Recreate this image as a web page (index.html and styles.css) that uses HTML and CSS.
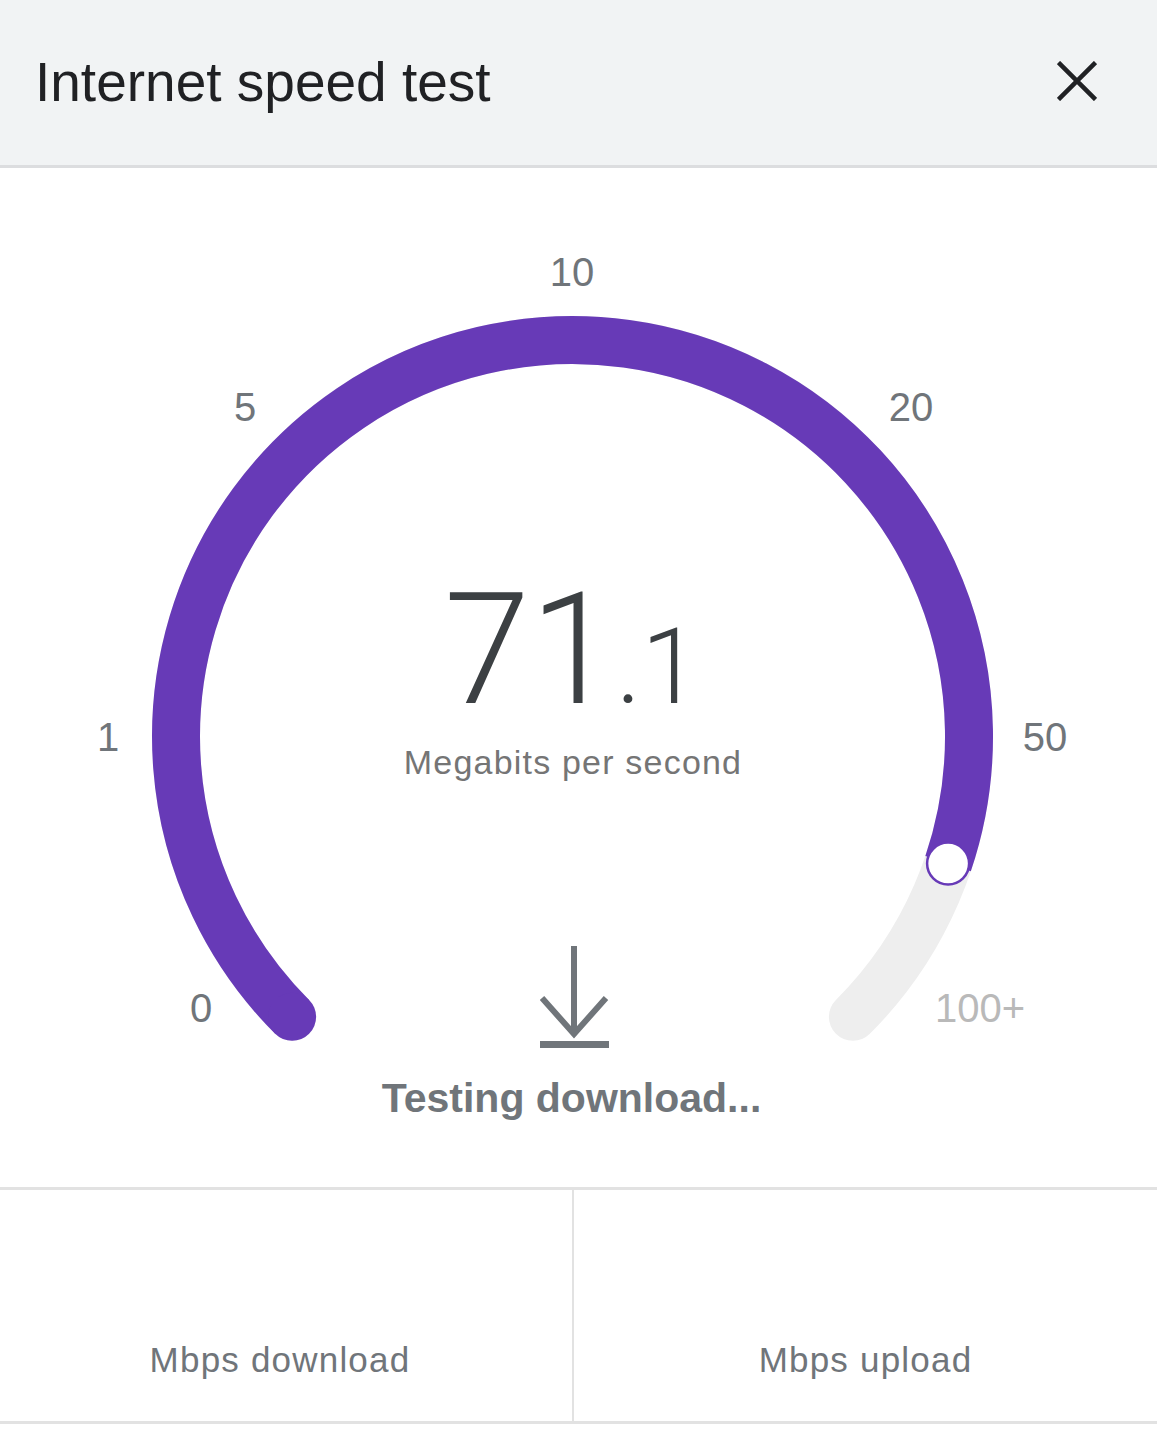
FILE: index.html
```html
<!DOCTYPE html>
<html lang="en">
<head>
<meta charset="utf-8">
<title>Internet speed test</title>
<link rel="stylesheet" href="styles.css">
</head>
<body>
<div class="panel">
  <header class="bar">
    <h1 class="bar-title">Internet speed test</h1>
    <button class="close" aria-label="Close">
      <svg width="40" height="40" viewBox="0 0 40 40" aria-hidden="true">
        <path d="M1.5 1.5 L38.5 38.5 M38.5 1.5 L1.5 38.5" />
      </svg>
    </button>
  </header>

  <section class="gauge">
    <svg class="dial" width="1157" height="1019" viewBox="0 168 1157 1019">
      <path class="track" d="M292.13 1016.87 A396.5 396.5 0 1 1 852.87 1016.87" />
      <path class="fill" d="M292.13 1016.87 A396.5 396.5 0 1 1 948.1 863.6" />
      <circle class="fill-cap" cx="292.13" cy="1016.87" r="24" />
      <circle class="knob" cx="948.1" cy="863.6" r="21" />

      <text class="tick" x="572" y="286">10</text>
      <text class="tick" x="245" y="421">5</text>
      <text class="tick" x="911" y="421">20</text>
      <text class="tick" x="108" y="751">1</text>
      <text class="tick" x="1045" y="751">50</text>
      <text class="tick" x="201" y="1022">0</text>
      <text class="tick tick-max" x="980" y="1022">100+</text>

      <text class="value" x="572" y="703">71<tspan class="value-frac">.1</tspan></text>
      <text class="unit" x="573" y="774">Megabits per second</text>
    </svg>

    <div class="status">
      <svg class="status-icon" width="70" height="104" viewBox="0 0 70 104" aria-hidden="true">
        <path d="M34 0 V88 M2 52 L34 88 L66 52" />
        <rect x="0" y="95" width="69" height="7" />
      </svg>
      <p class="status-text">Testing download...</p>
    </div>
  </section>

  <section class="results">
    <div class="result result-download">
      <span class="result-label">Mbps download</span>
    </div>
    <div class="result result-upload">
      <span class="result-label">Mbps upload</span>
    </div>
  </section>
</div>
</body>
</html>
```

FILE: styles.css
```css
* {
  box-sizing: border-box;
}

html,
body {
  margin: 0;
  padding: 0;
  background: #ffffff;
}

body {
  font-family: "Liberation Sans", Arial, sans-serif;
  color: #202124;
}

.panel {
  width: 1157px;
}

/* Top bar */
.bar {
  height: 168px;
  display: flex;
  align-items: center;
  justify-content: space-between;
  padding: 0 60px 2px 35px;
  background: #f1f3f4;
  border-bottom: 3px solid #dcdddf;
}

.bar-title {
  margin: 0;
  font-size: 55px;
  font-weight: 400;
  line-height: 60px;
  color: #202124;
}

.close {
  width: 40px;
  height: 40px;
  padding: 0;
  border: 0;
  background: none;
  display: block;
  margin-bottom: 2px;
}

.close svg {
  display: block;
}

.close path {
  stroke: #202124;
  stroke-width: 4.5;
  fill: none;
}

/* Dial */
.gauge {
  position: relative;
  height: 1019px;
}

.dial {
  display: block;
}

.track {
  fill: none;
  stroke: #eeeeee;
  stroke-width: 48;
  stroke-linecap: round;
}

.fill {
  fill: none;
  stroke: #673ab7;
  stroke-width: 48;
}

.fill-cap {
  fill: #673ab7;
}

.knob {
  fill: #ffffff;
  stroke: #673ab7;
  stroke-width: 2.5;
}

.tick {
  font-family: "Liberation Sans", Arial, sans-serif;
  font-size: 40px;
  fill: #70757a;
  text-anchor: middle;
}

.tick-max {
  fill: #b9b9b9;
}

.value {
  font-family: Roboto, "Liberation Sans", sans-serif;
  font-weight: 300;
  font-size: 155px;
  fill: #3c4043;
  text-anchor: middle;
}

.value-frac {
  font-size: 106px;
}

.unit {
  font-family: "Liberation Sans", Arial, sans-serif;
  font-size: 34px;
  letter-spacing: 1.2px;
  fill: #757575;
  text-anchor: middle;
}

/* Current phase, under the dial centre */
.status {
  position: absolute;
  left: 0;
  right: 0;
  top: 778px;
  display: flex;
  flex-direction: column;
  align-items: center;
  padding-right: 14px;
}

.status-icon {
  display: block;
  margin-left: 6px;
}

.status-icon path {
  fill: none;
  stroke: #70757a;
  stroke-width: 6;
}

.status-icon rect {
  fill: #70757a;
}

.status-text {
  margin: 24px 0 0;
  font-size: 41px;
  font-weight: 700;
  line-height: 48px;
  color: #70757a;
}

/* Result cells */
.results {
  display: grid;
  grid-template-columns: 572px 1fr;
  border-top: 3px solid #e2e2e2;
  border-bottom: 3px solid #e2e2e2;
}

.result {
  height: 231px;
  display: flex;
  align-items: flex-end;
  justify-content: center;
  padding-bottom: 41px;
}

.result-download {
  padding-right: 12px;
}

.result-upload {
  border-left: 2px solid #e2e2e2;
}

.result-label {
  font-size: 35px;
  line-height: 40px;
  letter-spacing: 1.2px;
  color: #70757a;
}
```
